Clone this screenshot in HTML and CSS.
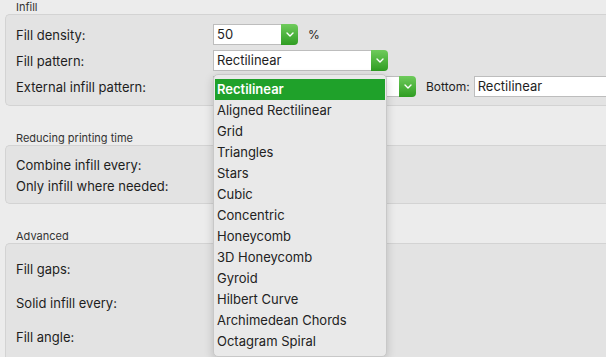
FILE: index.html
```html
<!DOCTYPE html>
<html lang="en">
<head>
    <meta charset="UTF-8">
    <title>Infill settings</title>
    <link rel="stylesheet" href="styles.css">
</head>
<body>
    <div class="settings">
        <section class="group">
            <div class="group-title">Infill</div>
            <div class="group-box">
                <div class="row">
                    <div class="label">Fill density:</div>
                    <div class="controls">
                        <div class="combo combo-density">
                            <span class="combo-value">50</span>
                            <span class="combo-btn"><svg width="8" height="5" viewBox="0 0 8 5"><path d="M1 1 L4 4 L7 1" fill="none" stroke="#fff" stroke-width="1.4" stroke-linecap="round" stroke-linejoin="round"/></svg></span>
                        </div>
                        <span class="unit">%</span>
                    </div>
                </div>
                <div class="row">
                    <div class="label">Fill pattern:</div>
                    <div class="controls">
                        <div class="combo combo-pattern">
                            <span class="combo-value">Rectilinear</span>
                            <span class="combo-btn"><svg width="8" height="5" viewBox="0 0 8 5"><path d="M1 1 L4 4 L7 1" fill="none" stroke="#fff" stroke-width="1.4" stroke-linecap="round" stroke-linejoin="round"/></svg></span>
                        </div>
                    </div>
                </div>
                <div class="row">
                    <div class="label">External infill pattern:</div>
                    <div class="controls">
                        <div class="combo combo-external">
                            <!-- value is covered by the open menu -->
                            <span class="combo-value"></span>
                            <span class="combo-btn"><svg width="8" height="5" viewBox="0 0 8 5"><path d="M1 1 L4 4 L7 1" fill="none" stroke="#fff" stroke-width="1.4" stroke-linecap="round" stroke-linejoin="round"/></svg></span>
                            <ul class="menu">
                                <li class="menu-item selected">Rectilinear</li>
                                <li class="menu-item">Aligned Rectilinear</li>
                                <li class="menu-item">Grid</li>
                                <li class="menu-item">Triangles</li>
                                <li class="menu-item">Stars</li>
                                <li class="menu-item">Cubic</li>
                                <li class="menu-item">Concentric</li>
                                <li class="menu-item">Honeycomb</li>
                                <li class="menu-item">3D Honeycomb</li>
                                <li class="menu-item">Gyroid</li>
                                <li class="menu-item">Hilbert Curve</li>
                                <li class="menu-item">Archimedean Chords</li>
                                <li class="menu-item">Octagram Spiral</li>
                            </ul>
                        </div>
                        <span class="side-label">Bottom:</span>
                        <div class="text-field">Rectilinear</div>
                    </div>
                </div>
            </div>
        </section>

        <section class="group">
            <div class="group-title">Reducing printing time</div>
            <div class="group-box compact">
                <div class="row"><div class="label">Combine infill every:</div></div>
                <div class="row"><div class="label">Only infill where needed:</div></div>
            </div>
        </section>

        <section class="group">
            <div class="group-title">Advanced</div>
            <div class="group-box loose">
                <div class="row tall"><div class="label">Fill gaps:</div></div>
                <div class="row tall"><div class="label">Solid infill every:</div></div>
                <div class="row tall"><div class="label">Fill angle:</div></div>
            </div>
        </section>
    </div>
</body>
</html>
```

FILE: styles.css
```css
body {
    margin: 0;
    background: #ececec;
    color: #1e1e1e;
    font-family: Inter, "Liberation Sans", sans-serif;
    font-size: 13px;
    overflow: hidden;
}

.settings {
    padding-left: 5px;
    height: 100vh;
    overflow: hidden;
}

.group + .group {
    margin-top: 25px;
}

.group-title {
    height: 14px;
    line-height: 14px;
    padding-left: 11px;
    font-size: 11px;
    color: #333;
}

.group-box {
    background: #e3e3e3;
    border: 1px solid #d3d3d3;
    border-right: none;
    border-radius: 5px 0 0 5px;
    padding: 9px 0 8px 10px;
    display: flex;
    flex-direction: column;
    gap: 5px;
}

.group-box.compact {
    padding-top: 8px;
    padding-bottom: 7px;
    gap: 0;
}

.group-box.loose {
    padding-top: 13px;
    gap: 11px;
    padding-bottom: 40px;
}

.row {
    display: grid;
    grid-template-columns: 197px auto;
    align-items: center;
    height: 21px;
}

.row.tall {
    height: 23px;
}

.controls {
    display: flex;
    align-items: center;
}

.combo {
    position: relative;
    display: flex;
    height: 21px;
}

.combo-value {
    flex: 1;
    background: #fff;
    border: 1px solid #bdbdbd;
    border-right: none;
    padding-left: 3px;
    line-height: 19px;
    box-sizing: border-box;
}

.combo-btn {
    width: 17px;
    background: linear-gradient(#6fcb5c, #2f9d22);
    border-radius: 0 4px 4px 0;
    display: flex;
    align-items: center;
    justify-content: center;
}

.combo-density {
    width: 85px;
}

.combo-pattern {
    width: 175px;
}

.combo-external {
    width: 203px;
}

.unit {
    margin-left: 10px;
    font-size: 12px;
}

.side-label {
    margin-left: 10px;
    font-size: 12px;
}

.text-field {
    margin-left: 4px;
    background: #fff;
    border: 1px solid #bdbdbd;
    border-right: none;
    height: 21px;
    line-height: 19px;
    box-sizing: border-box;
    padding-left: 3px;
    width: 140px;
}

.menu {
    position: absolute;
    top: -2px;
    left: 0;
    width: 174px;
    margin: 0;
    padding: 4px 1px;
    list-style: none;
    background: #e9e9e9;
    border: 1px solid #c8c8c8;
    border-radius: 5px;
    box-shadow: 0 3px 10px rgba(0, 0, 0, 0.18);
    box-sizing: border-box;
    z-index: 2;
}

.menu-item {
    height: 21px;
    line-height: 21px;
    padding-left: 2px;
    color: #222;
}

.menu-item.selected {
    background: #1fa12a;
    color: #fff;
    font-weight: 600;
}
```
